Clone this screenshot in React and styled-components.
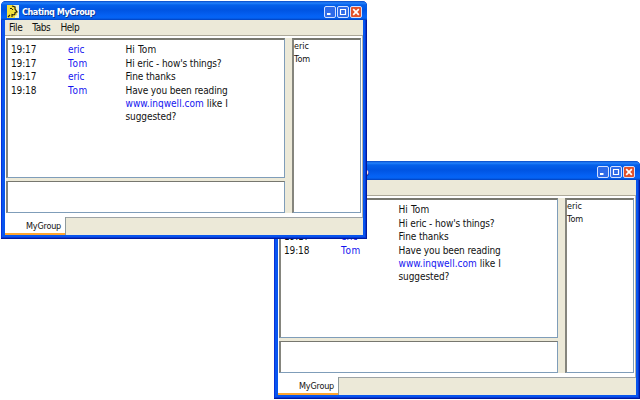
import React from "react";
import styled, { createGlobalStyle } from "styled-components";

const Global = createGlobalStyle`
  * { box-sizing: border-box; }
  body { margin: 0; background: #fff; overflow: hidden; }
`;
const Desktop = styled.main`
  position: relative;
  width: 640px;
  height: 400px;
  overflow: hidden;
  background: #fff;
  font-family: "DejaVu Sans Condensed", "DejaVu Sans", sans-serif;
  font-stretch: condensed;
  font-size: 10px;
  color: #111;
`;
const Frame = styled.section`
  position: absolute;
  left: ${(p) => p.$x}px;
  top: ${(p) => p.$y}px;
  width: 366px;
  height: 238px;
  display: flex;
  flex-direction: column;
  padding: 0 4px 4px;
  background: #0855ee;
  border-radius: 5px 5px 0 0;
  box-shadow: inset -1px -1px #001a9c, inset 1px 0 #0831d9, inset -2px -2px #0738d4;
  overflow: hidden;
`;
const TitleBar = styled.header`
  height: 19px;
  flex: none;
  margin: 0 -4px;
  padding: 2px 5px 0 6px;
  display: flex;
  align-items: center;
  background: linear-gradient(#0a48c4 0, #2382fc 2px, #0560ea 4px, #0054e2 9px, #0562f5 15px, #0563f4 17px, #0140bd 19px);
`;
const Title = styled.h1`
  margin: 0 auto 0 3px;
  font: bold 9px "DejaVu Sans Condensed", "DejaVu Sans", sans-serif;
  font-stretch: condensed;
  letter-spacing: -0.42px;
  color: #fff;
  text-shadow: 1px 1px #0a3897;
  white-space: nowrap;
`;
const Buttons = styled.div`
  display: flex;
  gap: 1px;
`;
const Client = styled.div`
  flex: 1;
  min-height: 0;
  display: flex;
  flex-direction: column;
  background: #ece9d8;
`;
const MenuBar = styled.nav`
  height: 15px;
  flex: none;
  display: flex;
  align-items: center;
  gap: 10px;
  padding: 0 0 1px 4px;
  letter-spacing: -0.42px;
`;
const Body = styled.div`
  height: 183px;
  flex: none;
  display: flex;
  border-top: 1px solid #aca899;
  border-bottom: 1px solid #9da3a5;
  border-right: 1px solid #b5b3a6;
  background: #fff;
  padding: 2px 0 4px 1px;
`;
const Left = styled.div`
  width: 279px;
  display: flex;
  flex-direction: column;
  gap: 3px;
  background: #ece9d8;
`;
const Sunken = styled.div`
  border: 1px solid #7f9db9;
  border-top-color: #77776f;
  border-left: 2px solid #85857d;
  background: #fff;
`;
const Log = styled(Sunken)`
  height: 140px;
  border-top-width: 2px;
  padding: 3px 0 0 3px;
`;
const Entry = styled(Sunken)`
  flex: 1;
`;
const Row = styled.div`
  display: grid;
  grid-template-columns: 57px 57.5px 130px;
  line-height: 13.5px;
  white-space: nowrap;
`;
const Time = styled.time`
  letter-spacing: -0.12px;
`;
const Name = styled.span`
  color: #1414f0;
`;
const Sender = styled(Name)`
  letter-spacing: ${(p) => p.$spacing || 0}px;
`;
const Line = styled.span`
  display: block;
  width: max-content;
  line-height: 13px;
  letter-spacing: ${(p) => p.$spacing || 0}px;
`;
const Splitter = styled.div`
  width: 7px;
  background: #ece9d8;
`;
const Users = styled(Sunken)`
  width: 69px;
  border-top-width: 2px;
  font-size: 9px;
  line-height: 13px;
`;
const Tabs = styled.footer`
  flex: 1;
  display: flex;
`;
const Tab = styled.div`
  width: 61px;
  height: 18px;
  margin-top: -1px;
  padding: 4px 0 0 21px;
  background: #fff;
  border-right: 1px solid #8f9b9c;
  box-shadow: inset 0 -2px #ffa52e;
  font-size: 9px;
  letter-spacing: -0.2px;
  line-height: 11px;
`;

const AppIcon = () => (
  <svg width="12" height="13" viewBox="0 0 12 13">
    <path d="M0 0h12v13H0z" fill="#f5e13c" />
    <path d="M6 0h6v13H8V11l2-1V8l1-1-2-3V2z" fill="#e9f1df" />
    <path d="M5 1l3 1v2l2 3-2 .5V9l-1 1-2-.5V12M3 3.5h2M5.5 4v1M1 12l2-2" fill="none" stroke="#26230f" strokeWidth="1.1" />
  </svg>
);
const Control = ({ kind }) => (
  <svg width="12" height="12" viewBox="0 0 12 12">
    <rect x=".5" y=".5" width="11" height="11" rx="1.5" fill={kind === "close" ? "#e2522b" : "#2f6be8"} stroke="#d3e0ff" />
    {kind === "min" && <path d="M3 8h3.5" stroke="#fff" strokeWidth="2" />}
    {kind === "max" && <path d="M3 3.5h6M3.5 3.5v5h5v-5" fill="none" stroke="#fff" strokeWidth="1.2" />}
    {kind === "close" && <path d="M3.2 3.2l5.6 5.6M8.8 3.2l-5.6 5.6" stroke="#fff" strokeWidth="1.7" />}
  </svg>
);

const messages = [
  { time: "19:17", name: "eric", text: "Hi Tom", spacing: 0.1 },
  { time: "19:17", name: "Tom", text: "Hi eric - how's things?", spacing: -0.13 },
  { time: "19:17", name: "eric", text: "Fine thanks", spacing: -0.13 },
];

const ChatWindow = ({ x, y }) => (
  <Frame $x={x} $y={y}>
    <TitleBar>
      <AppIcon />
      <Title>Chatinq MyGroup</Title>
      <Buttons>
        <Control kind="min" />
        <Control kind="max" />
        <Control kind="close" />
      </Buttons>
    </TitleBar>
    <Client>
      <MenuBar>
        <span>File</span>
        <span>Tabs</span>
        <span>Help</span>
      </MenuBar>
      <Body>
        <Left>
          <Log>
            {messages.map(({ time, name, text, spacing }, i) => (
              <Row key={i}>
                <Time>{time}</Time>
                <Sender $spacing={name === "Tom" ? 0.6 : -0.1}>{name}</Sender>
                <Line $spacing={spacing}>{text}</Line>
              </Row>
            ))}
            <Row>
              <Time>19:18</Time>
              <Sender $spacing={0.6}>Tom</Sender>
              <div>
                <Line $spacing={-0.13}>Have you been reading</Line>
                <Line $spacing={0.03}><Name>www.inqwell.com</Name> like I</Line>
                <Line $spacing={-0.08}>suggested?</Line>
              </div>
            </Row>
          </Log>
          <Entry />
        </Left>
        <Splitter />
        <Users>
          <div>eric</div>
          <div>Tom</div>
        </Users>
      </Body>
      <Tabs>
        <Tab>MyGroup</Tab>
      </Tabs>
    </Client>
  </Frame>
);

export default function App() {
  return (
    <>
      <Global />
      <Desktop>
        <ChatWindow x={274} y={161} />
        <ChatWindow x={1} y={1} />
      </Desktop>
    </>
  );
}
